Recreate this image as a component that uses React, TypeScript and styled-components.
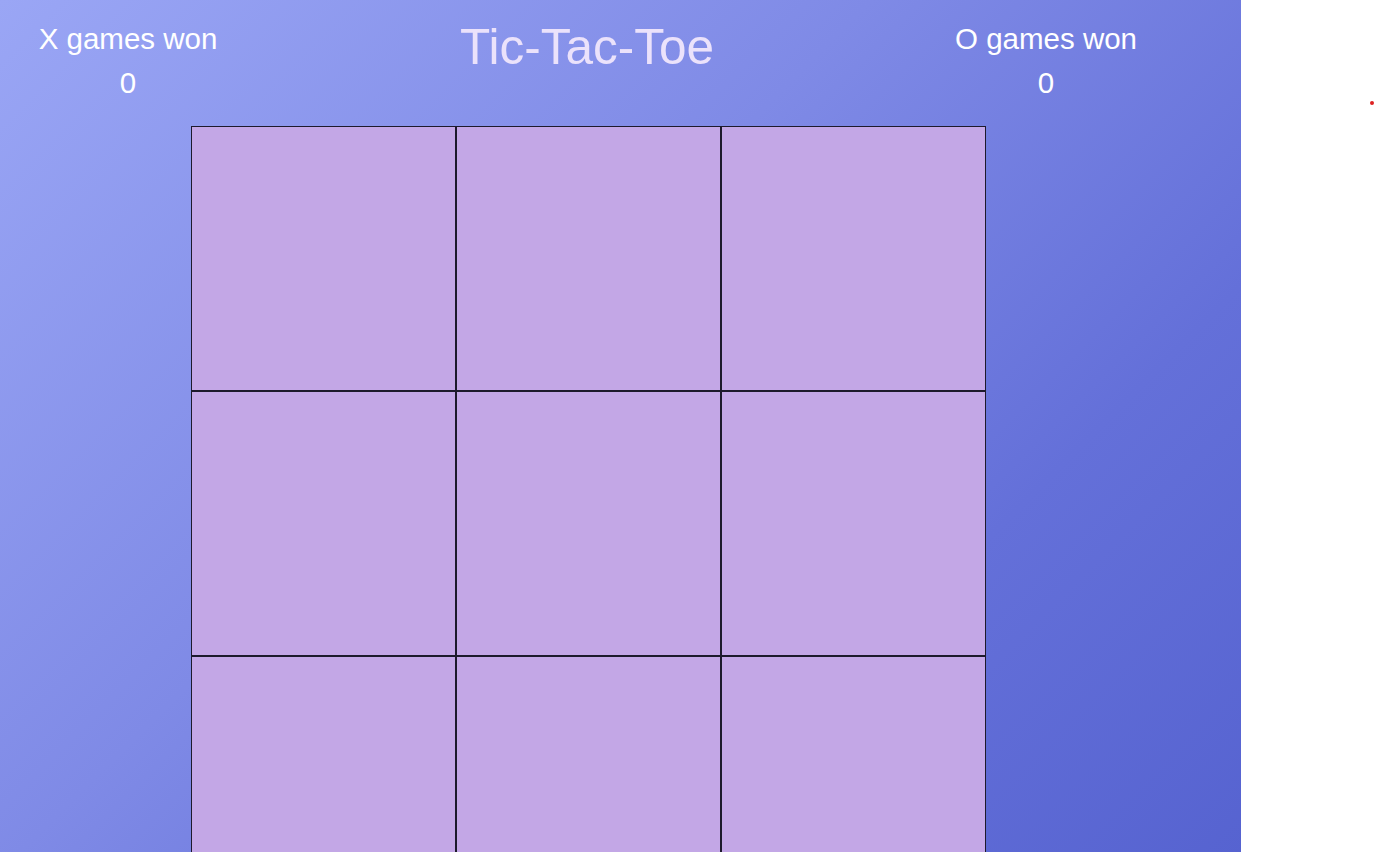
import React from "react";
import styled, { createGlobalStyle } from "styled-components";

const GlobalStyle = createGlobalStyle`
  html, body { margin: 0; padding: 0; background: #ffffff; }
  body { font-family: "Liberation Sans", Arial, sans-serif; }
`;

const Page = styled.div`
  display: flex;
  align-items: flex-start;
  width: 1376px;
`;

const Panel = styled.main`
  width: 1241px;
  min-height: 940px;
  background: linear-gradient(135deg, #9aa6f5 0%, #7f8ae6 40%, #6470d9 70%, #5461cf 100%);
`;

const Content = styled.div`
  width: 1177px;
`;

const Header = styled.header`
  display: grid;
  grid-template-columns: 256px 662px 256px;
  height: 126px;
  align-items: start;
`;

const ScoreBlock = styled.div`
  display: flex;
  flex-direction: column;
  align-items: center;
  padding-top: 24px;
  color: #ffffff;
`;

const ScoreLabel = styled.div`
  font-size: 29.5px;
  line-height: 30px;
  white-space: nowrap;
`;

const ScoreValue = styled.div`
  font-size: 29.5px;
  line-height: 30px;
  margin-top: 14px;
`;

const Title = styled.h1`
  margin: 0;
  padding-top: 22px;
  font-size: 49.5px;
  line-height: 50px;
  font-weight: normal;
  text-align: center;
  color: #ebe2fb;
`;

const Board = styled.div`
  display: grid;
  grid-template-columns: repeat(3, 265px);
  grid-auto-rows: 265px;
  width: 795px;
  margin: 0 auto;
`;

const Cell = styled.button`
  box-sizing: border-box;
  border: 1px solid #1d1a2c;
  background: #c3a7e6;
  padding: 0;
  margin: 0;
  cursor: pointer;
`;

const Aside = styled.aside`
  flex: 1;
  display: flex;
  justify-content: flex-end;
  padding-top: 101px;
  padding-right: 2px;
`;

const Dot = styled.span`
  width: 4px;
  height: 4px;
  border-radius: 50%;
  background: #dd2222;
`;

export default function App() {
  const cells = Array.from({ length: 9 }, (_, i) => i);
  return (
    <>
      <GlobalStyle />
      <Page>
        <Panel>
          <Content>
            <Header>
              <ScoreBlock>
                <ScoreLabel>X games won</ScoreLabel>
                <ScoreValue>0</ScoreValue>
              </ScoreBlock>
              <Title>Tic-Tac-Toe</Title>
              <ScoreBlock>
                <ScoreLabel>O games won</ScoreLabel>
                <ScoreValue>0</ScoreValue>
              </ScoreBlock>
            </Header>
            <Board>
              {cells.map((i) => (
                <Cell key={i} aria-label={`cell ${i + 1}`} />
              ))}
            </Board>
          </Content>
        </Panel>
        <Aside>
          <Dot />
        </Aside>
      </Page>
    </>
  );
}
